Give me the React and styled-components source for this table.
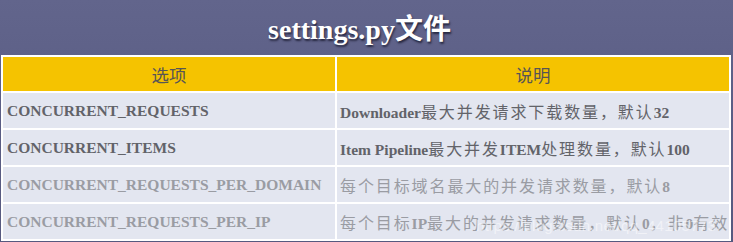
import React from "react";
import styled, { createGlobalStyle } from "styled-components";

const Global = createGlobalStyle`
  html, body { margin: 0; padding: 0; }
  body {
    width: 733px;
    height: 242px;
    overflow: hidden;
    background: linear-gradient(180deg, #62658c 0%, #5a5d84 50%, #56597f 100%);
    font-family: "Liberation Serif", "Noto Sans CJK SC", serif;
  }
`;

const Slide = styled.div`
  position: relative;
  width: 733px;
  height: 242px;
  display: flex;
  flex-direction: column;
`;

const Title = styled.h1`
  margin: 0;
  height: 55px;
  display: flex;
  align-items: center;
  justify-content: center;
  padding-right: 14px;
  padding-bottom: 2px;
  box-sizing: border-box;
  color: #ffffff;
  font-family: "Liberation Serif", "Noto Sans CJK SC", serif;
  font-weight: bold;
  font-size: 28px;
  text-shadow: 1px 2px 2px rgba(20, 20, 40, 0.75);
`;

const Table = styled.table`
  margin-left: 1px;
  width: 730px;
  border-collapse: separate;
  border-spacing: 2px;
  background: #ffffff;
  table-layout: fixed;
`;

const HeadCell = styled.th`
  height: 34px;
  padding: 0;
  background: #f5c300;
  color: #575555;
  font-family: "Noto Sans CJK SC", sans-serif;
  font-weight: normal;
  font-size: 17.5px;
  text-align: center;
  vertical-align: middle;
`;

const Cell = styled.td`
  height: 35px;
  padding: 0 0 0 ${(p) => (p.$first ? 4 : 3)}px;
  background: #e3e6f0;
  color: ${(p) => (p.$faded ? "#9a9ca3" : "#626369")};
  font-family: "Liberation Serif", "Noto Sans CJK SC", serif;
  font-weight: bold;
  font-size: 15.5px;
  white-space: nowrap;
  vertical-align: middle;
`;

const Han = styled.span`
  font-family: "Noto Sans CJK SC", sans-serif;
  font-weight: normal;
  font-size: 16px;
  letter-spacing: 1.9px;
`;

const Watermark = styled.div`
  position: absolute;
  left: 476px;
  top: 217px;
  color: rgba(255, 255, 255, 0.5);
  font-family: "Liberation Sans", sans-serif;
  font-size: 15px;
  letter-spacing: 0.3px;
  pointer-events: none;
`;

const rows = [
  {
    key: "CONCURRENT_REQUESTS",
    desc: ["Downloader", { h: "最大并发请求下载数量，默认" }, "32"],
  },
  {
    key: "CONCURRENT_ITEMS",
    desc: ["Item Pipeline", { h: "最大并发" }, "ITEM", { h: "处理数量，默认" }, "100"],
  },
  {
    key: "CONCURRENT_REQUESTS_PER_DOMAIN",
    desc: [{ h: "每个目标域名最大的并发请求数量，默认" }, "8"],
    faded: true,
  },
  {
    key: "CONCURRENT_REQUESTS_PER_IP",
    desc: [
      { h: "每个目标" },
      "IP",
      { h: "最大的并发请求数量，默认" },
      "0",
      { h: "，非" },
      "0",
      { h: "有效" },
    ],
    faded: true,
  },
];

export default function App() {
  return (
    <>
      <Global />
      <Slide>
        <Title>settings.py文件</Title>
        <Table>
          <colgroup>
            <col style={{ width: "332px" }} />
            <col style={{ width: "392px" }} />
          </colgroup>
          <thead>
            <tr>
              <HeadCell>选项</HeadCell>
              <HeadCell>说明</HeadCell>
            </tr>
          </thead>
          <tbody>
            {rows.map((r) => (
              <tr key={r.key}>
                <Cell $first $faded={r.faded}>{r.key}</Cell>
                <Cell $faded={r.faded}>
                  {r.desc.map((d, i) =>
                    typeof d === "string" ? (
                      <React.Fragment key={i}>{d}</React.Fragment>
                    ) : (
                      <Han key={i}>{d.h}</Han>
                    )
                  )}
                </Cell>
              </tr>
            ))}
          </tbody>
        </Table>
        <Watermark>https://blog.csdn.net/qq_44105773</Watermark>
      </Slide>
    </>
  );
}
